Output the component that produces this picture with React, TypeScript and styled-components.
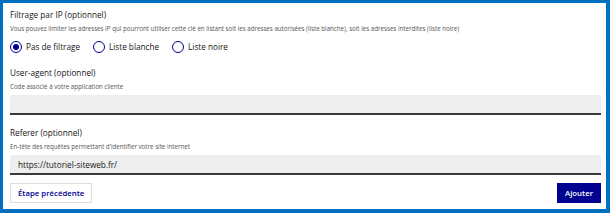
import styled, { createGlobalStyle } from "styled-components"

const colors = {
    frame: "#0070c0",
    blueFrance: "#000091",
    text: "#161616",
    mention: "#555555",
    fieldBg: "#eeeeee",
    fieldLine: "#3a3a3a",
    border: "#dddddd",
}

const GlobalStyle = createGlobalStyle`
    * { box-sizing: border-box; }
    html, body { margin: 0; padding: 0; background: #ffffff; }
    body { font-family: "Open Sans", "Noto Sans", sans-serif; color: ${colors.text}; }
`

const Frame = styled.div`
    width: 610px;
    height: 213px;
    border-style: solid;
    border-color: ${colors.frame};
    border-width: 3px 4px 4px 3px;
    background: #ffffff;
    padding: 6px 5px 0 7px;
    display: flex;
    flex-direction: column;
`

const Group = styled.div<{ $gap?: number }>`
    display: flex;
    flex-direction: column;
    margin-bottom: ${(p) => p.$gap ?? 0}px;
`

const Label = styled.div`
    font-size: 8.2px;
    line-height: 12px;
    font-weight: 400;
    color: ${colors.text};
`

const Hint = styled.div`
    font-size: 6.2px;
    line-height: 9px;
    color: ${colors.mention};
    margin-top: 3px;
`

const RadioRow = styled.div`
    display: flex;
    align-items: center;
    gap: 13px;
    margin-top: 8px;
`

const RadioItem = styled.label`
    display: flex;
    align-items: center;
    gap: 4px;
    font-size: 8.2px;
    line-height: 12px;
    color: ${colors.text};
`

const RadioCircle = styled.span<{ $checked?: boolean }>`
    width: 12px;
    height: 12px;
    border-radius: 50%;
    border: 1px solid ${colors.blueFrance};
    display: flex;
    align-items: center;
    justify-content: center;

    &::after {
        content: "";
        width: 6px;
        height: 6px;
        border-radius: 50%;
        background: ${colors.blueFrance};
        display: ${(p) => (p.$checked ? "block" : "none")};
    }
`

const Field = styled.div`
    height: 20px;
    margin-top: 4px;
    background: ${colors.fieldBg};
    border-radius: 2px 2px 0 0;
    box-shadow: inset 0 -2px 0 0 ${colors.fieldLine};
    display: flex;
    align-items: center;
    padding: 0 8px 2px;
    font-size: 8.2px;
    color: ${colors.text};
`

const Actions = styled.div`
    display: flex;
    justify-content: space-between;
    align-items: center;
    margin-top: 8px;
`

const Button = styled.button<{ $primary?: boolean }>`
    display: flex;
    align-items: center;
    height: 20px;
    padding: 0 7px;
    font-family: inherit;
    font-size: 7.8px;
    font-weight: 600;
    border: 1px solid ${(p) => (p.$primary ? colors.blueFrance : colors.border)};
    background: ${(p) => (p.$primary ? colors.blueFrance : "#ffffff")};
    color: ${(p) => (p.$primary ? "#ffffff" : colors.blueFrance)};
    cursor: pointer;
`

const options = [
    { id: "none", label: "Pas de filtrage", checked: true },
    { id: "white", label: "Liste blanche", checked: false },
    { id: "black", label: "Liste noire", checked: false },
]

export default function App() {
    return (
        <>
            <GlobalStyle />
            <Frame>
                <Group $gap={14}>
                    <Label>Filtrage par IP (optionnel)</Label>
                    <Hint>
                        Vous pouvez limiter les adresses IP qui pourront utiliser cette clé en listant soit les adresses autorisées (liste blanche), soit les adresses interdites (liste noire)
                    </Hint>
                    <RadioRow>
                        {options.map((o) => (
                            <RadioItem key={o.id}>
                                <RadioCircle $checked={o.checked} />
                                {o.label}
                            </RadioItem>
                        ))}
                    </RadioRow>
                </Group>

                <Group $gap={12}>
                    <Label>User-agent (optionnel)</Label>
                    <Hint>Code associé à votre application cliente</Hint>
                    <Field />
                </Group>

                <Group>
                    <Label>Referer (optionnel)</Label>
                    <Hint>En-tête des requêtes permettant d'identifier votre site internet</Hint>
                    <Field>https://tutoriel-siteweb.fr/</Field>
                </Group>

                <Actions>
                    <Button>Étape précédente</Button>
                    <Button $primary>Ajouter</Button>
                </Actions>
            </Frame>
        </>
    )
}
